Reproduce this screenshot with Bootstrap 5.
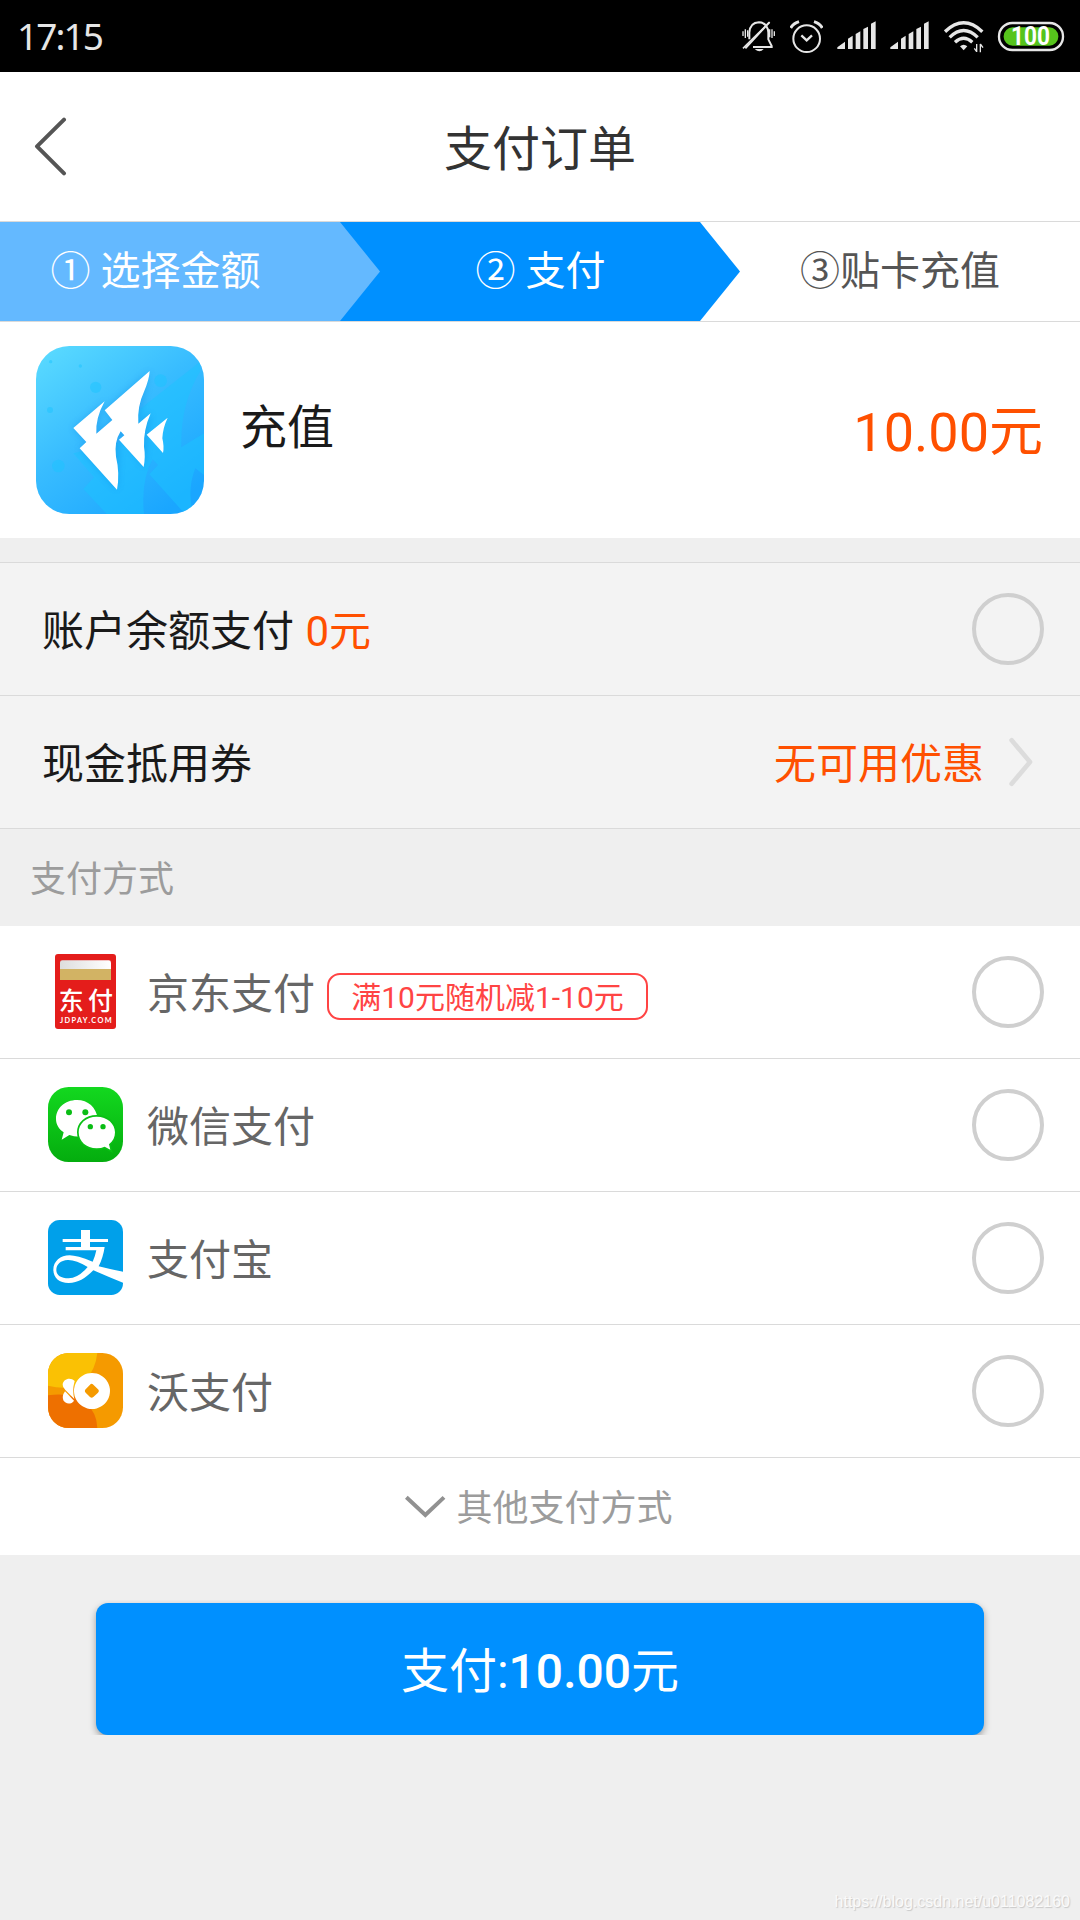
<!DOCTYPE html>
<html lang="zh-CN">
<head>
<meta charset="utf-8">
<meta name="viewport" content="width=device-width, initial-scale=1">
<title>支付订单</title>
<link href="https://cdn.jsdelivr.net/npm/bootstrap@5.3.0/dist/css/bootstrap.min.css" rel="stylesheet">
<style>
body{background:#efefef;font-family:Roboto,"Noto Sans CJK SC",sans-serif;color:#1a1a1a;line-height:1}
svg{display:block;flex:none}
.screen{width:1080px;height:1920px;overflow:hidden}
.statusbar{height:72px;background:#000;color:#e6e6e6;padding:2px 15px 0 17px}
.clock{font:37px/1 "Noto Sans",sans-serif;letter-spacing:-1.9px;padding-bottom:3px}
.ml13{margin-left:13px}.ml14{margin-left:14px}.ml15{margin-left:15px}
.titlebar{height:149px;padding-top:6px}
.titlebar h1{font-size:48px;font-weight:400;color:#333;line-height:1}
.backbtn{left:34px;top:45px}
.steps{height:101px;border-top:1px solid #dadada;border-bottom:1px solid #dadada;font-size:40px;color:#555}
.step-done{width:380px;padding-right:69px;background:#64b9ff;color:#fff;clip-path:polygon(0 0,340px 0,380px 50%,340px 100%,0 100%);z-index:1}
.step-now{width:400px;margin-left:-40px;padding-left:1px;background:#0090ff;color:#fff;clip-path:polygon(0 0,360px 0,400px 50%,360px 100%,0 100%)}
.step-next{padding-right:20px}
.product{height:216px;padding:0 37px 0 36px}
.product .pname{font-size:47px;margin-left:36px;padding-bottom:5px}
.price{font-size:54px;padding-top:6px}
.orange{color:#ff5000}
.payrow{height:133px;border-bottom:1px solid #dadada;padding:0 36px 0 42px;font-size:42px}
.rowtext{padding-top:5px}
.accounts{margin-top:24px;border-top:1px solid #dadada;background:#f3f3f3}
.balance{margin-left:1px}
.goto{margin:0 11px 0 25px}
.ring{width:72px;height:72px;border:4px solid #cfcfcf;border-radius:50%;background:transparent}
.section{height:97px;padding:5px 0 0 30px;font-size:36px;color:#9c9c9c}
.methods .payrow{padding-left:48px;color:#666}
.methods .payrow>svg{margin-bottom:2px}
.methods .mname{margin-left:24px;padding-top:5px}
.promo{height:47px;width:321px;border:2px solid #ff4444;border-radius:13px;color:#ff4444;font-size:30px;margin:9px 0 0 12px;padding-top:2px}
.more{height:97px;font-size:36px;color:#9c9c9c}
.morelabel{padding-top:5px;margin-left:9px;margin-right:2px}
.paybtn,.paybtn:hover{height:132px;margin:48px 96px 0;padding:10px 0 5px;border:0;border-radius:12px;background:#0090ff;color:#fff;font-size:48px;line-height:1;box-shadow:0 3px 7px rgba(0,0,0,.35);clip-path:inset(-3px -10px 0 -10px)}
.paybtn b{font-weight:500}
.watermark{right:10px;bottom:10px;font:16px/1 "Liberation Sans",sans-serif;color:#fafafa;text-shadow:1px 1px 1px #c8c8c8}
</style>
</head>
<body>
<div class="screen position-relative d-flex flex-column">
  <header class="statusbar d-flex align-items-center flex-shrink-0">
    <span class="clock me-auto">17:15</span>
    <svg width="33" height="34" viewBox="66 60 99 102" fill="none" stroke="#e6e6e6" stroke-width="5"><path d="M88 118V98Q90 68 117 67Q143 68 145 98V118L155 138V141H99M76 145L148 67" stroke-width="6"/><path d="M69 145L149 66"/><path d="M104 147H131Q119 161 104 147Z" fill="#e6e6e6" stroke="none"/><path d="M69 94V108M76 88V114M83 91V110M149 88V112M156 88V114M163 94V108" stroke-width="4"/></svg>
    <svg class="ml15" width="33" height="34" viewBox="210 60 99 102" fill="none" stroke="#e6e6e6" stroke-width="6"><circle cx="260" cy="116" r="40"/><path d="M244 106L260 121L276 106" stroke-width="7"/><path d="M212 84Q220 70 237 65M307 84Q299 70 282 65" stroke-width="9"/></svg>
    <svg class="ml14" width="39" height="34" viewBox="351 60 117 102" fill="#e6e6e6"><path d="M352 147V142L375 125V147ZM384 147V116L398 107V147ZM407 147V102L421 94V147ZM430 147V87L444 80V147ZM453 147V71L467 64V147Z"/></svg>
    <svg class="ml14" width="39" height="34" viewBox="351 60 117 102" fill="#e6e6e6"><path d="M352 147V142L375 125V147ZM384 147V116L398 107V147ZM407 147V102L421 94V147ZM430 147V87L444 80V147ZM453 147V71L467 64V147Z"/></svg>
    <svg class="ml15" width="40" height="34" viewBox="672 60 120 102" fill="none" stroke="#e6e6e6" stroke-width="10"><path d="M675 95Q731 42 787 95M689 112Q731 71 773 112M705 127Q731 103 757 127"/><path d="M720 139Q731 129 742 139L731 151Z" fill="#e6e6e6" stroke="none"/><path d="M770 132V156M763 145L770 155M781 157V132M789 143L781 132" stroke-width="4"/></svg>
    <svg class="ml13" width="68" height="34" viewBox="831 60 204 102"><rect x="837" y="69" width="192" height="81" rx="40" fill="none" stroke="#e6e6e6" stroke-width="7"/><rect x="851" y="82" width="164" height="55" rx="27" fill="#56c41c"/><text x="873" y="136" textLength="117" lengthAdjust="spacingAndGlyphs" font-family="Roboto,sans-serif" font-weight="700" font-size="75" fill="#fff">100</text></svg>
  </header>

  <nav class="titlebar bg-white position-relative d-flex justify-content-center align-items-center flex-shrink-0">
    <a class="backbtn position-absolute" href="#" aria-label="返回"><svg width="34" height="60" viewBox="102 351 102 180" fill="none" stroke="#555" stroke-width="12" stroke-linecap="round" stroke-linejoin="round"><path d="M192 359L111 439L192 520"/></svg></a>
    <h1 class="mb-0">支付订单</h1>
  </nav>

  <div class="steps bg-white d-flex flex-shrink-0">
    <div class="step-done position-relative d-flex justify-content-center align-items-center">① 选择金额</div>
    <div class="step-now d-flex justify-content-center align-items-center">② 支付</div>
    <div class="step-next flex-grow-1 d-flex justify-content-center align-items-center">③贴卡充值</div>
  </div>

  <section class="product bg-white d-flex align-items-center flex-shrink-0">
    <svg width="168" height="168" viewBox="48 48 504 504">
      <defs><linearGradient id="sea" x1="0" y1="0" x2=".75" y2="1"><stop offset="0" stop-color="#5cdcff"/><stop offset=".5" stop-color="#38bcff"/><stop offset="1" stop-color="#1aa6ff"/></linearGradient>
      <clipPath id="tile"><rect x="48" y="48" width="504" height="504" rx="100"/></clipPath>
      <filter id="soft" x="-20%" y="-20%" width="140%" height="140%"><feGaussianBlur stdDeviation="11"/></filter></defs>
      <g clip-path="url(#tile)"><rect x="48" y="48" width="504" height="504" fill="url(#sea)"/>
      <g fill="#1cc4ff" opacity=".5"><path d="M540 95L350 245L330 330L160 370L222 442L190 477L260 552H372Q362 450 398 388L414 405L388 433L495 552H520Q500 480 526 415L552 435V310L484 352Q480 225 540 125Z"/><circle cx="227" cy="172" r="17"/><circle cx="422" cy="152" r="19"/><circle cx="115" cy="408" r="19"/><circle cx="90" cy="240" r="9"/><circle cx="181" cy="108" r="5"/><circle cx="92" cy="95" r="5"/></g>
      <path d="M389 123L254 241L277 270L229 310L254 215L160 294L199 336L179 355L291 479L300 305L371 411L392 250L355 280Z" fill="#087bdc" opacity=".3" filter="url(#soft)"/>
      <g fill="#fff"><path d="M389 123L254 241L277 270L229 311Q226 265 254 214L160 294L199 336L179 355L291 479Q300 430 288 380Q282 335 302 304L313 316L297 329L371 411Q377 380 372 350Q370 300 392 250L355 281Q351 230 372 185Q388 148 389 123Z"/><path d="M443 263L380 314L429 369Q433 350 427 325Q428 295 443 263Z"/></g></g>
    </svg>
    <span class="pname me-auto">充值</span>
    <span class="price orange">10.00元</span>
  </section>

  <section class="accounts flex-shrink-0">
    <div class="payrow d-flex align-items-center"><span class="rowtext me-auto">账户余额支付 <span class="balance orange">0元</span></span><span class="ring"></span></div>
    <div class="payrow d-flex align-items-center"><span class="rowtext me-auto">现金抵用券</span><span class="rowtext orange">无可用优惠</span>
      <svg class="goto" width="24" height="50" viewBox="806 591 72 150" fill="none" stroke="#dcdcdc" stroke-width="14" stroke-linecap="round" stroke-linejoin="round"><path d="M814 601L869 666L814 731"/></svg></div>
  </section>

  <div class="section d-flex align-items-center flex-shrink-0">支付方式</div>

  <section class="methods bg-white flex-shrink-0">
    <div class="payrow d-flex align-items-center">
      <svg width="75" height="75" viewBox="54 72 225 225"><defs><linearGradient id="slot"><stop offset="0" stop-color="#ddd"/><stop offset="1" stop-color="#fff"/></linearGradient></defs><rect x="75" y="72" width="183" height="225" rx="9" fill="#e41d1b"/><path d="M90 117V98Q90 91 97 91H236Q243 91 243 98V117Z" fill="url(#slot)"/><path d="M90 117H243V150H90Z" fill="#d2b364"/><text x="86" y="239" textLength="163" font-family="'Noto Sans CJK SC',sans-serif" font-weight="500" font-size="75" fill="#fff">东付</text><text x="90" y="280" textLength="155" font-family="Lato,sans-serif" font-weight="700" font-size="22" fill="#fff">JDPAY.COM</text></svg>
      <span class="mname">京东支付</span><span class="promo d-flex justify-content-center align-items-center me-auto">满10元随机减1-10元</span><span class="ring"></span>
    </div>
    <div class="payrow d-flex align-items-center">
      <svg width="75" height="75" viewBox="54 471 225 225"><defs><linearGradient id="wx" x2="0" y2="1"><stop offset="0" stop-color="#13d81f"/><stop offset="1" stop-color="#04ad0e"/></linearGradient></defs><rect x="54" y="471" width="225" height="225" rx="62" fill="url(#wx)"/><path d="M141 510C104 510 78 535 78 567C78 584 87 597 101 607L95 629L118 615Q130 620 150 620Q200 612 203 566C199 532 174 510 141 510Z" fill="#fff"/><path d="M200 560C168 560 146 581 146 607C146 634 169 655 200 655Q214 655 224 650L241 659L237 643C249 634 255 622 255 607C255 581 232 560 200 560Z" fill="#fff" stroke="#09c014" stroke-width="10" paint-order="stroke"/><g fill="#09bd14"><circle cx="117" cy="547" r="9"/><circle cx="166" cy="547" r="9"/><circle cx="181" cy="590" r="8"/><circle cx="219" cy="590" r="8"/></g></svg>
      <span class="mname me-auto">微信支付</span><span class="ring"></span>
    </div>
    <div class="payrow d-flex align-items-center">
      <svg width="75" height="75" viewBox="54 60 225 225"><rect x="54" y="60" width="225" height="225" rx="35" fill="#00a0ea"/><path d="M153 90H180V117H234V126H180V141H224Q219 174 206 199Q240 208 279 215V248Q235 231 190 211C164 236 145 249 116 249C87 249 70 233 70 209C70 184 91 166 119 166Q140 166 188 185Q195 171 199 151H107V141H153V126H98V117H153ZM173 201Q137 179 113 180C92 181 79 193 79 210C79 226 93 235 116 235Q145 234 173 201Z" fill="#fff" fill-rule="evenodd"/></svg>
      <span class="mname me-auto">支付宝</span><span class="ring"></span>
    </div>
    <div class="payrow d-flex align-items-center">
      <svg width="75" height="75" viewBox="54 459 225 225"><defs><clipPath id="wo"><rect x="54" y="459" width="225" height="225" rx="62"/></clipPath></defs><g clip-path="url(#wo)"><path d="M54 459H279V684H54Z" fill="#f59a00"/><path d="M54 459H202Q196 510 166 542Q125 575 54 557Z" fill="#fac104"/><path d="M54 586Q120 575 164 607Q201 637 202 684H54Z" fill="#ee7000"/></g><g fill="#fff"><path d="M134 543C120 530 99 538 98 554Q98 562 106 570L133 597Q126 570 134 543Z"/><path d="M105 574L132 602C124 614 106 613 100 601Q95 588 105 574Z"/><path d="M186 519A54 54 0 1 1 185.900 519ZM180 554L167 568Q162 573 167 578L180 591Q185 596 190 591L204 578Q209 573 204 568L190 554Q185 549 180 554Z" fill-rule="evenodd"/></g></svg>
      <span class="mname me-auto">沃支付</span><span class="ring"></span>
    </div>
    <div class="more d-flex justify-content-center align-items-center">
      <svg width="42" height="24" viewBox="76 164 126 72" fill="none" stroke="#919191" stroke-width="12"><path d="M80 171L137 224L193 171"/></svg><span class="morelabel">其他支付方式</span>
    </div>
  </section>

  <button type="button" class="btn paybtn flex-shrink-0">支付:<b>10.00</b>元</button>
  <div class="watermark position-absolute">https://blog.csdn.net/u011082160</div>
</div>
<script src="https://cdn.jsdelivr.net/npm/bootstrap@5.3.0/dist/js/bootstrap.bundle.min.js"></script>
</body>
</html>
